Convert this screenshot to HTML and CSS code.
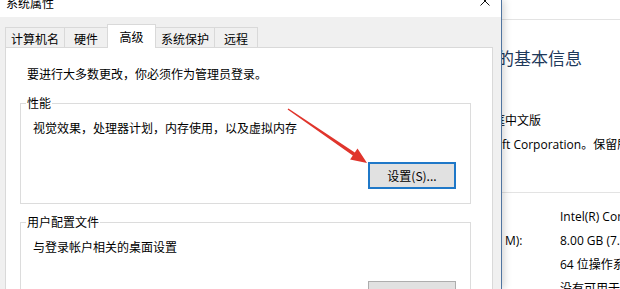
FILE: index.html
```html
<!DOCTYPE html>
<html lang="zh-CN">
<head>
    <meta charset="UTF-8">
    <title>系统属性</title>
    <link rel="stylesheet" href="styles.css">
</head>
<body>
    <div class="screen">
        <div class="dialog">
            <div class="titlebar">
                <span class="title">系统属性</span>
                <svg class="close" width="10" height="10" viewBox="0 0 10 10">
                    <path d="M0.5 0.5 L9.5 9.5 M9.5 0.5 L0.5 9.5" stroke="#111" stroke-width="1" fill="none"/>
                </svg>
            </div>
            <div class="tabs">
                <div class="tab">计算机名</div>
                <div class="tab">硬件</div>
                <div class="tab active">高级</div>
                <div class="tab">系统保护</div>
                <div class="tab">远程</div>
            </div>
            <div class="panel">
                <p class="note">要进行大多数更改，你必须作为管理员登录。</p>
                <fieldset class="group">
                    <legend>性能</legend>
                    <p>视觉效果，处理器计划，内存使用，以及虚拟内存</p>
                    <div class="actions"><button class="btn default">设置(S)...</button></div>
                </fieldset>
                <fieldset class="group second">
                    <legend>用户配置文件</legend>
                    <p>与登录帐户相关的桌面设置</p>
                    <div class="actions"><button class="btn">设置(E)...</button></div>
                </fieldset>
            </div>
        </div>

        <div class="sysinfo">
            <div class="toolbar"></div>
            <h2>的基本信息</h2>
            <p class="line edition">庭中文版</p>
            <p class="line copyright">ft Corporation。保留所有权利。</p>
            <div class="sep"></div>
            <div class="spec"><span class="k"></span><span class="v">Intel(R) Core(TM) i5</span></div>
            <div class="spec"><span class="k">M):</span><span class="v">8.00 GB (7.88 GB 可用)</span></div>
            <div class="spec"><span class="k"></span><span class="v">64 位操作系统，基于 x64 的处理器</span></div>
            <div class="spec"><span class="k"></span><span class="v">没有可用于此显示器的笔或触控输入</span></div>
        </div>

        <!-- 标注箭头 -->
        <svg class="arrow" width="620" height="289" viewBox="0 0 620 289">
            <polygon points="288.4,108.4 354.8,152.6 357.5,148.6 367,163 350.1,159.4 352.8,155.4 287.6,109.6" fill="#e0352c"/>
        </svg>
    </div>
</body>
</html>
```

FILE: styles.css
```css
body {
    margin: 0;
    font-family: "Noto Sans CJK SC", sans-serif;
    font-size: 12px;
    color: #000;
}
.screen {
    display: flex;
    width: 620px;
    height: 289px;
    overflow: hidden;
    position: relative;
    background: #fff;
}
.dialog {
    width: 501px;
    flex: none;
    display: flex;
    flex-direction: column;
    background: #f0f0f0;
    border-right: 1px solid #4f74a0;
    position: relative;
    z-index: 1;
    box-shadow: 2px 0 8px rgba(0, 0, 0, 0.18);
}
.titlebar {
    height: 17px;
    flex: none;
    background: #fff;
    display: flex;
    justify-content: space-between;
    overflow: hidden;
}
.title {
    margin: -5px 0 0 6px;
    line-height: 16px;
}
.close {
    margin: -4px 11px 0 0;
}
.tabs {
    display: flex;
    align-items: flex-end;
    padding: 7px 0 0 5px;
    flex: none;
}
.tab {
    box-sizing: border-box;
    height: 20px;
    min-width: 44px;
    padding: 2px 5px 0;
    display: flex;
    align-items: center;
    justify-content: center;
    border: 1px solid #d9d9d9;
    border-bottom: none;
    margin-right: -1px;
    background: #f0f0f0;
}
.tab.active {
    height: 24px;
    min-width: 49px;
    padding-top: 0;
    margin-bottom: -1px;
    background: #fff;
    position: relative;
    z-index: 1;
}
.panel {
    flex: 1;
    margin: 0 8px 0 5px;
    background: #fff;
    border: 1px solid #d9d9d9;
    border-bottom: none;
    padding: 18px 21px 0 14px;
    overflow: hidden;
}
.panel p {
    margin: 0;
    line-height: 16px;
}
.note {
    margin-left: 7px !important;
}
.group {
    margin: 14px 0 0;
    padding: 0 5px 14px;
    border: 1px solid #dcdcdc;
}
.group.second {
    margin-top: 11px;
}
.group legend {
    padding: 0 1px;
    line-height: 14px;
}
.group p {
    margin: 10px 0 0 7px !important;
}
.actions {
    display: flex;
    justify-content: flex-end;
    margin-top: 26px;
    padding-right: 9px;
}
.btn {
    box-sizing: border-box;
    width: 88px;
    height: 27px;
    padding: 0;
    font-family: inherit;
    font-size: 12px;
    color: #000;
    background: #e1e1e1;
    border: 1px solid #adadad;
}
.btn.default {
    border: 2px solid #1f78c8;
}
.sysinfo {
    flex: 1;
    overflow: hidden;
    font-family: "Open Sans", "Noto Sans CJK SC", sans-serif;
    font-size: 12px;
    white-space: nowrap;
}
.toolbar {
    height: 19px;
    border-bottom: 1px solid #e3e3e3;
}
.sysinfo h2 {
    margin: 27px 0 0 -5px;
    font-size: 17px;
    font-weight: normal;
    line-height: 24px;
    color: #1e395b;
}
.line {
    margin: 0;
    line-height: 16px;
}
.edition {
    margin: 42px 0 0 -9px;
}
.copyright {
    margin-top: 8px;
}
.sep {
    margin: 39px 0 12px;
    border-top: 1px solid #e3e3e3;
}
.spec {
    display: flex;
    line-height: 24px;
}
.k {
    width: 55px;
    padding-left: 3px;
    flex: none;
}
.arrow {
    position: absolute;
    left: 0;
    top: 0;
    z-index: 2;
    pointer-events: none;
}
```
